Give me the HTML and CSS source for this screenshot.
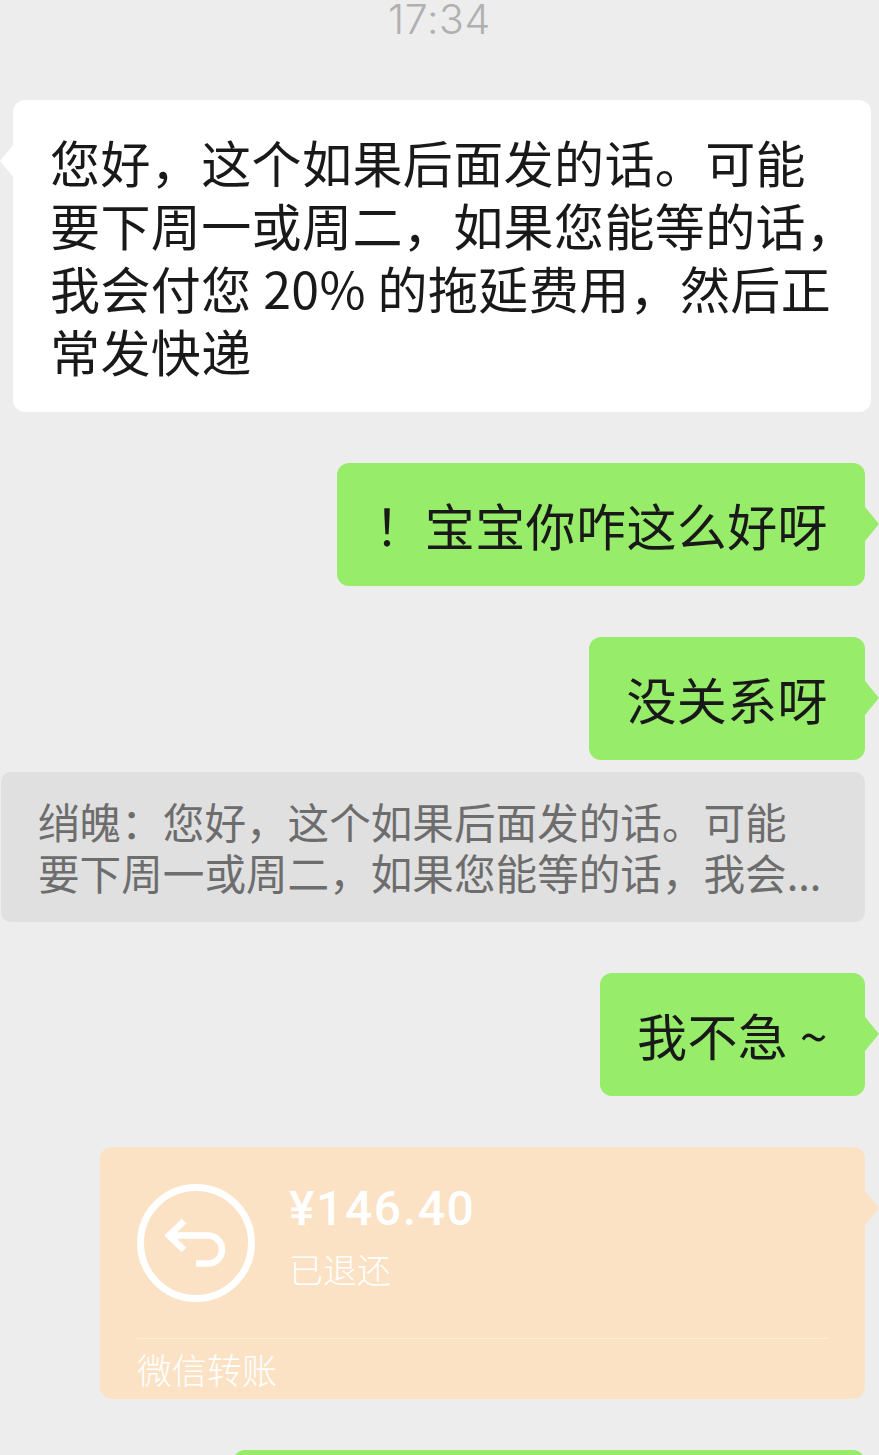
FILE: index.html
```html
<!DOCTYPE html>
<html lang="zh-CN">
<head>
<meta charset="utf-8">
<title>聊天记录</title>
<link rel="stylesheet" href="styles.css">
</head>
<body>
<main class="chat">
  <div class="time">17:34</div>
  <div class="bubble incoming">您好，这个如果后面发的话。可能<br>要下周一或周二，如果您能等的话，<br>我会付您 20% 的拖延费用，然后正<br>常发快递</div>
  <div class="bubble outgoing">！宝宝你咋这么好呀</div>
  <div class="reply-group">
    <div class="bubble outgoing">没关系呀</div>
    <div class="quote">绡魄：您好，这个如果后面发的话。可能<br>要下周一或周二，如果您能等的话，我会...</div>
  </div>
  <div class="bubble outgoing">我不急 ~</div>
  <div class="transfer">
    <div class="transfer-main">
      <svg class="transfer-icon" viewBox="0 0 118 118" width="118" height="118" fill="none" stroke="#fff" aria-hidden="true">
        <circle cx="59" cy="59" r="55.5" stroke-width="7"/>
        <path d="M47 37L32 51.5L47 66M33 51.5H71A14 14 0 0 1 71 79.5H59" stroke-width="6.5"/>
      </svg>
      <div class="transfer-info">
        <div class="amount">¥146.40</div>
        <div class="status">已退还</div>
      </div>
    </div>
    <div class="transfer-foot">微信转账</div>
  </div>
  <div class="bubble outgoing last">&nbsp;</div>
</main>
</body>
</html>
```
FILE: styles.css
```css
* {
  box-sizing: border-box;
}

html,
body {
  margin: 0;
  height: 1455px;
  overflow: hidden;
  background: #ededed;
}

.chat {
  display: flex;
  flex-direction: column;
  align-items: flex-end;
  gap: 51px;
  width: 879px;
  padding-right: 14px;
  font-family: "Noto Sans CJK SC", "Noto Sans", sans-serif;
}

.time {
  align-self: center;
  width: 879px;
  height: 49px;
  margin-right: -14px;
  text-align: center;
  font-family: "Inter", "Noto Sans", sans-serif;
  font-size: 41px;
  font-weight: 300;
  line-height: 39px;
  letter-spacing: 0.6px;
  color: #b0b0b0;
}

.bubble {
  position: relative;
  padding: 30px 37px;
  border-radius: 12px;
  font-size: 50px;
  line-height: 63px;
  letter-spacing: 0.4px;
  white-space: nowrap;
  color: #191919;
}

.bubble::after {
  content: "";
  position: absolute;
  top: 44px;
  width: 14px;
  height: 34px;
  background: inherit;
}

.incoming {
  align-self: flex-start;
  width: 858px;
  margin-left: 13px;
  background: #fff;
}

.incoming::after {
  left: -13px;
  clip-path: polygon(100% 0, 0 50%, 100% 100%);
}

.outgoing {
  background: #97ed6a;
}

.outgoing::after {
  right: -14px;
  clip-path: polygon(0 0, 100% 50%, 0 100%);
}

.reply-group {
  display: flex;
  flex-direction: column;
  align-items: flex-end;
  gap: 12px;
}

.quote {
  width: 864px;
  padding: 24px 37px;
  border-radius: 10px;
  background: #e0e0e0;
  font-size: 41.6px;
  line-height: 51px;
  white-space: nowrap;
  color: #6d6d6d;
}

.transfer {
  position: relative;
  width: 765px;
  height: 252px;
  padding: 37px 37px 0;
  border-radius: 12px;
  background: #fbe2c4;
  color: #fff;
}

.transfer::after {
  content: "";
  position: absolute;
  top: 44px;
  right: -14px;
  width: 14px;
  height: 34px;
  background: inherit;
  clip-path: polygon(0 0, 100% 50%, 0 100%);
}

.transfer-main {
  display: flex;
  gap: 34px;
  height: 155px;
  border-bottom: 1px solid rgba(255, 255, 255, 0.35);
}

.transfer-icon {
  display: block;
  flex: none;
}

.amount {
  font-family: "Roboto", "Noto Sans", sans-serif;
  font-size: 48px;
  font-weight: 500;
  line-height: 50px;
  letter-spacing: 1.6px;
}

.status {
  margin-top: 15px;
  font-size: 34px;
  font-weight: 300;
  line-height: 40px;
}

.transfer-foot {
  padding-top: 9px;
  font-size: 35px;
  font-weight: 300;
  line-height: 42px;
}

.last {
  width: 632px;
  flex: none;
}
```
